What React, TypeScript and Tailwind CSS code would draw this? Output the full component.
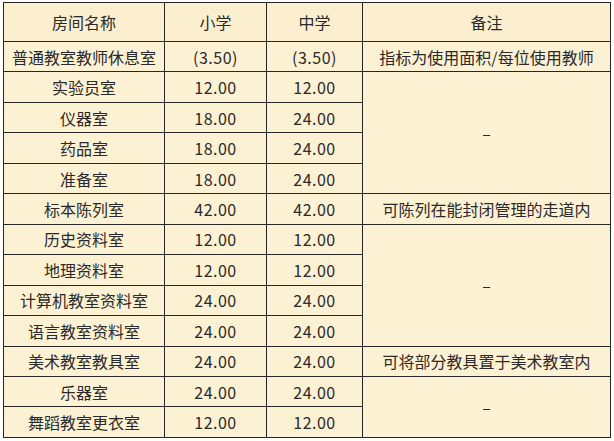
const rows: { name: string; a: string; b: string; note?: string; span?: number }[] = [
  { name: '普通教室教师休息室', a: '(3.50)', b: '(3.50)', note: '指标为使用面积/每位使用教师', span: 1 },
  { name: '实验员室', a: '12.00', b: '12.00', note: '–', span: 4 },
  { name: '仪器室', a: '18.00', b: '24.00' },
  { name: '药品室', a: '18.00', b: '24.00' },
  { name: '准备室', a: '18.00', b: '24.00' },
  { name: '标本陈列室', a: '42.00', b: '42.00', note: '可陈列在能封闭管理的走道内', span: 1 },
  { name: '历史资料室', a: '12.00', b: '12.00', note: '–', span: 4 },
  { name: '地理资料室', a: '12.00', b: '12.00' },
  { name: '计算机教室资料室', a: '24.00', b: '24.00' },
  { name: '语言教室资料室', a: '24.00', b: '24.00' },
  { name: '美术教室教具室', a: '24.00', b: '24.00', note: '可将部分教具置于美术教室内', span: 1 },
  { name: '乐器室', a: '24.00', b: '24.00', note: '–', span: 2 },
  { name: '舞蹈教室更衣室', a: '12.00', b: '12.00' },
]

const cell = 'border border-[#262626] text-center align-middle p-0'

export default function App() {
  return (
    <div className="w-[614px] h-[441px] bg-white pl-[3px] pt-[2px] font-['Noto_Sans_CJK_SC',sans-serif] text-[16px] text-[#2a2a2a] leading-none">
      <table className="table-fixed border-collapse w-[607px] bg-[#fdf1d4]">
        <colgroup>
          <col className="w-[161px]" />
          <col className="w-[102px]" />
          <col className="w-[96px]" />
          <col className="w-[248px]" />
        </colgroup>
        <thead>
          <tr className="h-[39px] bg-[#fcefd0]">
            <th className={`${cell} font-normal`}>房间名称</th>
            <th className={`${cell} font-normal`}>小学</th>
            <th className={`${cell} font-normal`}>中学</th>
            <th className={`${cell} font-normal`}>备注</th>
          </tr>
        </thead>
        <tbody>
          {rows.map(r => (
            <tr key={r.name} className="h-[30.46px]">
              <td className={cell}>{r.name}</td>
              <td className={`${cell} tracking-[0.5px]`}>{r.a}</td>
              <td className={`${cell} tracking-[0.5px]`}>{r.b}</td>
              {r.note && (
                <td className={cell} rowSpan={r.span}>{r.note}</td>
              )}
            </tr>
          ))}
        </tbody>
      </table>
    </div>
  )
}
